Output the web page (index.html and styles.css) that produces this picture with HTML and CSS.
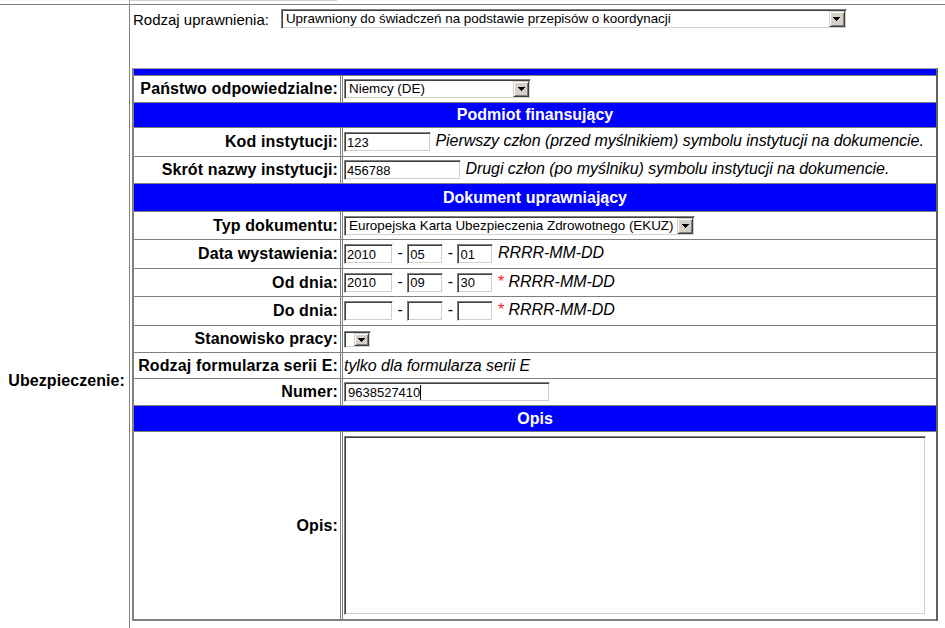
FILE: index.html
```html
<!DOCTYPE html>
<html lang="pl">
<head>
<meta charset="utf-8">
<title>Ubezpieczenie</title>
<link rel="stylesheet" href="styles.css">
</head>
<body>
<table class="frame">
  <tr class="prev">
    <td class="side"></td>
    <td class="main"><div class="prev-bar"></div></td>
  </tr>
  <tr class="current">
    <th class="side">Ubezpieczenie:</th>
    <td class="main">
      <div class="kind">
        <span class="kind-label">Rodzaj uprawnienia:</span>
        <span class="select w-kind"><span class="val">Uprawniony do świadczeń na podstawie przepisów o koordynacji</span><span class="btn"><svg width="7" height="4" viewBox="0 0 7 4" shape-rendering="crispEdges"><path d="M0 0h7v1h-1v1h-1v1h-1v1h-1v-1h-1v-1h-1v-1h-1z"/></svg></span></span>
      </div>
      <table class="form">
        <colgroup><col class="c-label"><col class="c-value"></colgroup>
        <tr class="cap"><td colspan="2"></td></tr>
        <tr class="h27">
          <th>Państwo odpowiedzialne:</th>
          <td><span class="select w-state"><span class="val">Niemcy (DE)</span><span class="btn"><svg width="7" height="4" viewBox="0 0 7 4" shape-rendering="crispEdges"><path d="M0 0h7v1h-1v1h-1v1h-1v1h-1v-1h-1v-1h-1v-1h-1z"/></svg></span></span></td>
        </tr>
        <tr class="section h25"><td colspan="2">Podmiot finansujący</td></tr>
        <tr class="h29">
          <th>Kod instytucji:</th>
          <td><input class="text w-kod" type="text" value="123"> <i>Pierwszy człon (przed myślnikiem) symbolu instytucji na dokumencie.</i></td>
        </tr>
        <tr class="h27">
          <th>Skrót nazwy instytucji:</th>
          <td><input class="text w-skrot" type="text" value="456788"> <i>Drugi człon (po myślniku) symbolu instytucji na dokumencie.</i></td>
        </tr>
        <tr class="section h28"><td colspan="2">Dokument uprawniający</td></tr>
        <tr class="h28">
          <th>Typ dokumentu:</th>
          <td><span class="select w-typ"><span class="val">Europejska Karta Ubezpieczenia Zdrowotnego (EKUZ)</span><span class="btn"><svg width="7" height="4" viewBox="0 0 7 4" shape-rendering="crispEdges"><path d="M0 0h7v1h-1v1h-1v1h-1v1h-1v-1h-1v-1h-1v-1h-1z"/></svg></span></span></td>
        </tr>
        <tr class="h29">
          <th>Data wystawienia:</th>
          <td><input class="text w-yyyy" type="text" value="2010"> - <input class="text w-mm" type="text" value="05"> - <input class="text w-mm" type="text" value="01"> <i>RRRR-MM-DD</i></td>
        </tr>
        <tr class="h28">
          <th>Od dnia:</th>
          <td><input class="text w-yyyy" type="text" value="2010"> - <input class="text w-mm" type="text" value="09"> - <input class="text w-mm" type="text" value="30"> <span class="req">*</span> <i>RRRR-MM-DD</i></td>
        </tr>
        <tr class="h29">
          <th>Do dnia:</th>
          <td><input class="text w-yyyy" type="text" value=""> - <input class="text w-mm" type="text" value=""> - <input class="text w-mm" type="text" value=""> <span class="req">*</span> <i>RRRR-MM-DD</i></td>
        </tr>
        <tr class="h27">
          <th>Stanowisko pracy:</th>
          <td><span class="select empty"><span class="val"></span><span class="btn"><svg width="7" height="4" viewBox="0 0 7 4" shape-rendering="crispEdges"><path d="M0 0h7v1h-1v1h-1v1h-1v1h-1v-1h-1v-1h-1v-1h-1z"/></svg></span></span></td>
        </tr>
        <tr class="h26">
          <th>Rodzaj formularza serii E:</th>
          <td><i>tylko dla formularza serii E</i></td>
        </tr>
        <tr class="h27">
          <th>Numer:</th>
          <td><span class="field w-numer">9638527410<span class="caret"></span></span></td>
        </tr>
        <tr class="section h26"><td colspan="2">Opis</td></tr>
        <tr class="h-opis">
          <th>Opis:</th>
          <td><textarea class="area"></textarea></td>
        </tr>
      </table>
    </td>
  </tr>
</table>
</body>
</html>
```
FILE: styles.css
```css
html {
  overflow: hidden;
}

body {
  margin: 0;
  background: #fff;
  color: #000;
  font-family: "Liberation Sans", Arial, sans-serif;
  font-size: 16px;
}

.frame {
  width: 945px;
  border-collapse: separate;
  border-spacing: 0;
}

.frame .side {
  width: 125px;
  padding: 0 4px 0 0;
  border-right: 1px solid #808080;
  text-align: right;
  font-weight: bold;
  font-size: 16px;
  letter-spacing: 0.08px;
  vertical-align: middle;
  white-space: nowrap;
}

.frame .main {
  padding: 0 0 0 2px;
  vertical-align: top;
}

.prev {
  height: 5px;
}

.prev td {
  padding: 0;
  border-bottom: 1px solid #808080;
  vertical-align: top;
}

.prev .side {
  border-right-color: #a8a8a8;
}

.prev .main {
  padding: 0;
}

.prev-bar {
  width: 207px;
  height: 1px;
  background: #d4d0c8;
}

.current {
  height: 752px;
}

.current .main {
  padding-top: 4px;
}

.kind {
  display: flex;
  align-items: center;
  height: 20px;
  margin-bottom: 39px;
  font-size: 15px;
}

.kind-label {
  margin-left: 1px;
  margin-right: 12px;
}

/* ---------- inner form table ---------- */
.form {
  width: 806px;
  table-layout: fixed;
  border-collapse: separate;
  border-spacing: 0;
  border-style: solid;
  border-width: 1px 2px 1px 2px;
  border-color: #a0a0a0 #606060 #808080 #808080;
}

.c-label {
  width: 206px;
}

.form td,
.form th {
  padding: 0;
  border-bottom: 1px solid #808080;
  vertical-align: middle;
  white-space: nowrap;
}

.form th {
  padding-right: 2px;
  text-align: right;
  font-weight: bold;
  letter-spacing: 0.13px;
}

.form th + td {
  border-left: 3px double #808080;
  padding-left: 1px;
}

.cap {
  height: 7px;
}

.cap td {
  background: #0000ff;
}

.section td {
  background: #0000ff;
  color: #fff;
  font-weight: bold;
  text-align: center;
}

.h25 { height: 25px; }
.h26 { height: 26px; }
.h27 { height: 27px; }
.h28 { height: 28px; }
.h29 { height: 29px; }
.h-opis { height: 188px; }

i {
  font-style: italic;
  letter-spacing: -0.05px;
}

.req {
  color: #ff2020;
}

/* ---------- controls ---------- */
.select {
  display: inline-flex;
  vertical-align: middle;
  box-sizing: border-box;
  height: 20px;
  padding: 1px;
  border: 1px solid;
  border-color: #808080 #fff #fff #808080;
  box-shadow: inset 1px 1px #404040, inset -1px -1px #d4d0c8;
  background: #fff;
  font-size: 13.4px;
  line-height: 16px;
}

.select .val {
  flex: 1;
  min-width: 0;
  padding: 0 3px;
  overflow: hidden;
  white-space: nowrap;
}

.select .btn {
  flex: none;
  display: flex;
  align-items: center;
  justify-content: center;
  width: 16px;
  box-sizing: border-box;
  background: #d4d0c8;
  border: 1px solid;
  border-color: #d4d0c8 #404040 #404040 #d4d0c8;
  box-shadow: inset 1px 1px #fff, inset -1px -1px #808080;
}

.select .btn svg {
  display: block;
  fill: #000;
}

.w-kind { width: 566px; }
.w-state { width: 187px; }
.w-typ { width: 351px; }

.select.empty {
  width: 27px;
  height: 17px;
}

.select.empty .btn {
  width: 15px;
}

.text,
.field,
.area {
  box-sizing: border-box;
  margin: 0;
  border: 1px solid;
  border-color: #808080 #fff #fff #808080;
  box-shadow: inset 1px 1px #404040, inset -1px -1px #d4d0c8;
  background: #fff;
  color: #000;
  font-family: "Liberation Sans", Arial, sans-serif;
  font-size: 13px;
  outline: none;
}

.text {
  height: 20px;
  padding: 0 2px;
  vertical-align: middle;
}

.field {
  display: inline-flex;
  align-items: center;
  height: 20px;
  padding: 0 2px 0 3px;
  vertical-align: middle;
}

.caret {
  display: inline-block;
  width: 1px;
  height: 15px;
  background: #000;
}

.w-kod { width: 87px; }
.w-skrot { width: 117px; }
.w-yyyy { width: 49px; }
.w-mm { width: 36px; }
.w-numer { width: 206px; }

.area {
  display: block;
  width: 582px;
  height: 179px;
  padding: 2px;
  resize: none;
}
```
